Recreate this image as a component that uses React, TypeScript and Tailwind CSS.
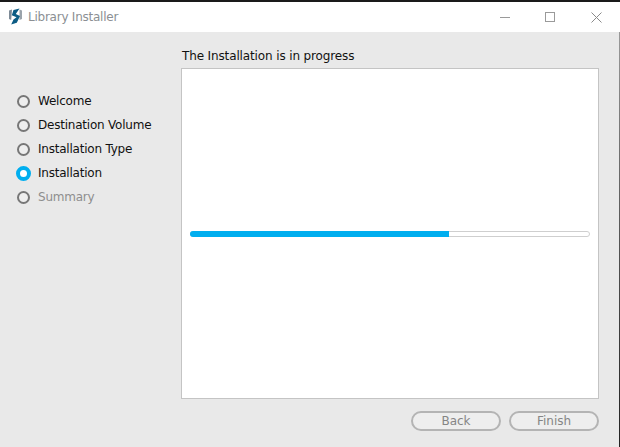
export default function App() {
  const steps = [
    { label: "Welcome", state: "done" },
    { label: "Destination Volume", state: "done" },
    { label: "Installation Type", state: "done" },
    { label: "Installation", state: "active" },
    { label: "Summary", state: "todo" },
  ];
  return (
    <div className="w-[620px] h-[447px] flex flex-col overflow-hidden bg-[#e9e9e9] text-[12px] text-[#111] font-['DejaVu_Sans',sans-serif]">
      <div className="h-[2px] bg-[#1a1a1a] shrink-0" />
      <div className="h-[30px] bg-white flex items-center shrink-0">
        <svg width="15" height="17" viewBox="0 0 15 17" className="ml-[8px] mt-[-1px]">
          <path d="M1 2.5 L4 1.5 L3.2 12 L1 11 Z" fill="#7d8a96" />
          <path d="M14 2.5 L11.5 1.5 L11.5 12 L14 11 Z" fill="#9aa3ab" />
          <path d="M11.5 0.5 L5.5 2 L3.8 7.2 L8.5 9.2 L5.5 11.5 L3.2 16.5 L8.8 14.8 L12 8 L7.8 6 L8.8 4.5 Z" fill="#0c5c84" />
        </svg>
        <span className="ml-[5px] text-[#8b8f93] tracking-[-0.24px]">Library Installer</span>
        <div className="ml-auto flex items-center">
          <svg width="10" height="10" viewBox="0 0 10 10" className="mr-[35px]"><path d="M0 5.5H10" stroke="#9a9a9a" /></svg>
          <svg width="10" height="10" viewBox="0 0 10 10" className="mr-[36px]"><rect x="0.5" y="0.5" width="9" height="9" fill="none" stroke="#9a9a9a" /></svg>
          <svg width="11" height="11" viewBox="0 0 11 11" className="mr-[18px]"><path d="M0.5 0.5L10.5 10.5M10.5 0.5L0.5 10.5" stroke="#8a8a8a" /></svg>
        </div>
      </div>
      <div className="flex flex-1 min-h-0">
        <div className="w-[181px] shrink-0 pl-[16px] pt-[57px] flex flex-col">
          {steps.map((s) => (
            <div key={s.label} className="h-[24px] flex items-center">
              {s.state === "active" ? (
                <div className="w-[15px] h-[15px] rounded-full border-[4px] border-[#00aeef] bg-white" />
              ) : (
                <div className="w-[13px] h-[13px] mx-[1px] rounded-full border-[2.5px] border-[#777777] bg-[#eeeeee]" />
              )}
              <span className={"ml-[7px] tracking-[-0.22px] " + (s.state === "todo" ? "text-[#8e8e8e]" : "text-[#111]")}>{s.label}</span>
            </div>
          ))}
        </div>
        <div className="w-[418px] shrink-0 flex flex-col">
          <div className="h-[36px] pt-[17px] pl-[1px] leading-[15px] text-[#111] tracking-[-0.13px]">The Installation is in progress</div>
          <div className="h-[331px] bg-white border border-[#c4c4c4] flex items-center px-[8px]">
            <div className="w-full h-[6px] rounded-full border border-[#cfcfcf] bg-white relative">
              <div className="absolute left-[-1px] top-[-1px] h-[6px] w-[259px] rounded-l-full rounded-r-[1px] bg-[#00aeef]" />
            </div>
          </div>
          <div className="flex justify-end gap-[8px] mt-[12px]">
            <button className="w-[90px] h-[20px] rounded-full border-2 border-[#b4b4b4] bg-[#eeeeee] text-[#858585] text-[12px] leading-none">Back</button>
            <button className="w-[90px] h-[20px] rounded-full border-2 border-[#b4b4b4] bg-[#eeeeee] text-[#858585] text-[12px] leading-none">Finish</button>
          </div>
        </div>
        <div className="ml-auto w-[1px] bg-gradient-to-b from-[#9a9a9a] via-[#555555] to-[#222222]" />
      </div>
    </div>
  );
}
